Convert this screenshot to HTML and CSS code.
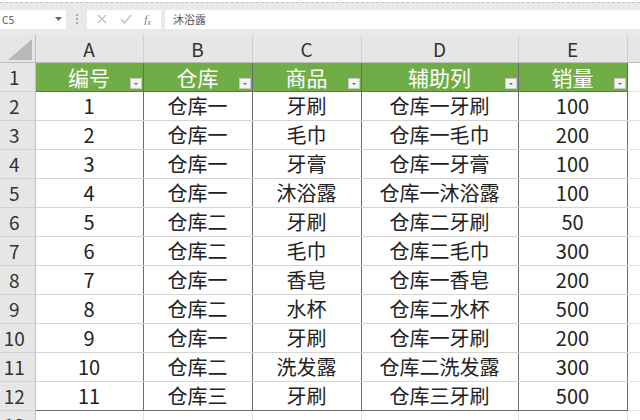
FILE: index.html
```html
<!DOCTYPE html>
<html lang="zh-CN">
<head>
  <meta charset="UTF-8" />
  <title>仓库商品销量</title>
  <link rel="stylesheet" href="styles.css">
</head>
<body>

<div class="formula-bar">
  <div class="name-box">
    <span>C5</span>
    <svg width="7" height="4" viewBox="0 0 7 4"><path d="M0 0h7L3.5 4z" fill="#666"/></svg>
  </div>
  <div class="grip">
    <svg width="2" height="10" viewBox="0 0 2 10"><rect y="0" width="2" height="2" fill="#aaa"/><rect y="4" width="2" height="2" fill="#aaa"/><rect y="8" width="2" height="2" fill="#aaa"/></svg>
  </div>
  <div class="fx-box">
    <svg width="10" height="10" viewBox="0 0 10 10"><path d="M1 1l8 8M9 1l-8 8" stroke="#bdbdbd" stroke-width="1.2" fill="none"/></svg>
    <svg width="12" height="10" viewBox="0 0 12 10"><path d="M1 5l3.5 4L11 1" stroke="#bdbdbd" stroke-width="1.2" fill="none"/></svg>
    <span class="fx">f<span class="x">x</span></span>
  </div>
  <div class="formula-input">沐浴露</div>
</div>

<table class="sheet">
  <colgroup>
    <col class="c-row">
    <col class="c-a">
    <col class="c-b">
    <col class="c-c">
    <col class="c-d">
    <col class="c-e">
    <col class="c-f">
  </colgroup>
  <thead>
    <tr class="col-heads">
      <th class="corner"><svg width="24" height="21" viewBox="0 0 24 21"><path d="M24 0V21H0z" fill="#b8b8b8"/></svg></th>
      <th>A</th><th>B</th><th>C</th><th>D</th><th>E</th><th class="blank"></th>
    </tr>
  </thead>
  <tbody id="rows">
    <tr class="title-row">
      <th class="row-head">1</th>
      <td>编号<i class="filter"></i></td>
      <td>仓库<i class="filter"></i></td>
      <td>商品<i class="filter"></i></td>
      <td>辅助列<i class="filter"></i></td>
      <td>销量<i class="filter"></i></td>
      <td class="blank"></td>
    </tr>
  </tbody>
</table>

<script>
  const data = [
    [1, '仓库一', '牙刷', 100],
    [2, '仓库一', '毛巾', 200],
    [3, '仓库一', '牙膏', 100],
    [4, '仓库一', '沐浴露', 100],
    [5, '仓库二', '牙刷', 50],
    [6, '仓库二', '毛巾', 300],
    [7, '仓库一', '香皂', 200],
    [8, '仓库二', '水杯', 500],
    [9, '仓库一', '牙刷', 200],
    [10, '仓库二', '洗发露', 300],
    [11, '仓库三', '牙刷', 500]
  ];

  const tbody = document.getElementById('rows');

  data.forEach((row, i) => {
    const tr = document.createElement('tr');
    if (i === data.length - 1) tr.className = 'last';
    const cells = [row[0], row[1], row[2], row[1] + row[2], row[3]];
    tr.innerHTML = `<th class="row-head">${i + 2}</th>` +
      cells.map(c => `<td>${c}</td>`).join('') +
      '<td class="blank"></td>';
    tbody.appendChild(tr);
  });

  // row 13 is empty and cut off by the window
  const empty = document.createElement('tr');
  empty.className = 'empty';
  empty.innerHTML = '<th class="row-head">13</th>' + '<td class="blank"></td>'.repeat(6);
  tbody.appendChild(empty);
</script>

</body>
</html>
```

FILE: styles.css
```css
body {
  margin: 0;
  background: #fff;
  font-family: "Noto Sans CJK SC", "Noto Sans", sans-serif;
  color: #222;
  overflow: hidden;
}

/* formula bar */
.formula-bar {
  display: flex;
  align-items: center;
  height: 32px;
  background: #e9e9e9;
  border-top: 1px dashed #c4c4c4;
  margin-top: 2px;
}

.name-box {
  display: flex;
  align-items: center;
  justify-content: space-between;
  width: 60px;
  height: 19px;
  padding: 0 4px 0 2px;
  background: #fff;
  font-size: 10px;
  color: #555;
}

.grip {
  width: 21px;
  display: flex;
  justify-content: center;
}

.fx-box {
  display: flex;
  align-items: center;
  justify-content: space-around;
  width: 74px;
  height: 19px;
  background: #fff;
  padding: 0 4px;
  box-sizing: border-box;
}

.fx {
  font-family: "Liberation Serif", serif;
  font-style: italic;
  font-size: 11px;
  color: #777;
}

.fx .x {
  font-size: 8px;
  position: relative;
  top: 2px;
}

.formula-input {
  flex: 1;
  height: 19px;
  margin-left: 4px;
  padding-left: 8px;
  background: #fff;
  font-size: 11px;
  line-height: 19px;
  color: #555;
}

/* sheet grid */
.sheet {
  border-collapse: collapse;
  table-layout: fixed;
  width: 640px;
}

.c-row { width: 35px; }
.c-a { width: 108px; }
.c-b { width: 109px; }
.c-c { width: 109px; }
.c-d { width: 157px; }
.c-e { width: 109px; }
.c-f { width: 13px; }

.sheet th,
.sheet td {
  padding: 0;
  font-weight: normal;
  text-align: center;
  white-space: nowrap;
  line-height: 28px;
}

.col-heads th {
  height: 25px;
  line-height: 25px;
  background: #e6e6e6;
  border-right: 1px solid #cfcfcf;
  border-bottom: 1px solid #bdbdbd;
  font-size: 19px;
  color: #333;
}

.col-heads .corner {
  vertical-align: bottom;
  padding: 0 3px 2px 0;
  border-right: 1px solid #bdbdbd;
}

.corner svg {
  display: block;
  margin-left: auto;
}

.row-head {
  height: 28px;
  background: #e6e6e6;
  border-right: 1px solid #bdbdbd;
  border-bottom: 1px solid #d2d2d2;
  font-size: 19px;
  color: #333;
  padding-right: 6px !important;
}

tbody td {
  position: relative;
  height: 28px;
  font-size: 20px;
  color: #222;
  border-left: 1px solid #6b6b6b;
  border-right: 1px solid #6b6b6b;
  border-bottom: 1px solid #d4d4d4;
}

tbody td.blank {
  border-left: 1px solid #6b6b6b;
  border-right: 1px solid #e2e2e2;
  border-bottom: 1px solid #e2e2e2;
}

.title-row td {
  background: #70ad47;
  color: #fff;
  font-size: 21px;
  border-top: 1px solid #6b6b6b;
  border-bottom: 1px solid #6b6b6b;
  border-left: 1px solid #4f4f4f;
}

.title-row td.blank {
  background: #fff;
  border-top: none;
  border-bottom: 1px solid #e2e2e2;
}

tr.last td {
  border-bottom: 1px solid #6b6b6b;
}

tr.last td.blank {
  border-bottom: 1px solid #e2e2e2;
}

tr.empty td.blank {
  border-left: 1px solid #e2e2e2;
}

.filter {
  position: absolute;
  right: 1px;
  bottom: 2px;
  width: 10px;
  height: 9px;
  background: #f3f3f3;
  border: 1px solid #c8c8c8;
}

.filter::after {
  content: "";
  position: absolute;
  left: 3px;
  top: 4px;
  border-left: 2px solid transparent;
  border-right: 2px solid transparent;
  border-top: 2px solid #666;
}
```
